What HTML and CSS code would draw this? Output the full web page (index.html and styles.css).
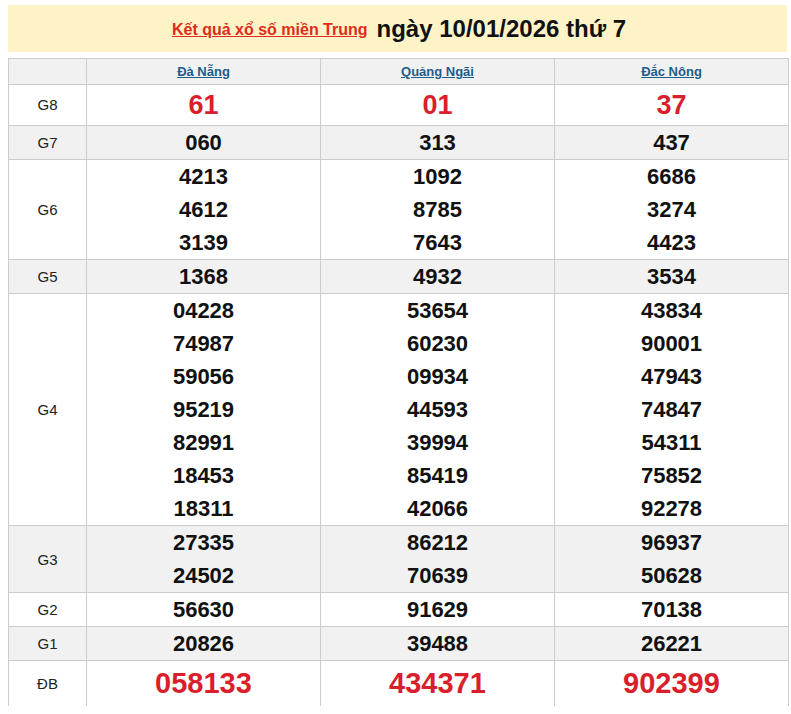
FILE: index.html
```html
<!DOCTYPE html>
<html lang="vi">
<head>
<meta charset="utf-8">
<title>Kết quả xổ số miền Trung</title>
<link rel="stylesheet" href="styles.css">
</head>
<body>
<div class="title-bar">
  <a class="title-link" href="#">Kết quả xổ số miền Trung</a>
  <span class="title-date">ngày 10/01/2026 thứ 7</span>
</div>
<table class="results">
  <colgroup>
    <col class="c-label"><col class="c-prov"><col class="c-prov"><col class="c-prov">
  </colgroup>
  <tr class="head">
    <td></td>
    <td><a href="#">Đà Nẵng</a></td>
    <td><a href="#">Quảng Ngãi</a></td>
    <td><a href="#">Đắc Nông</a></td>
  </tr>
  <tr class="g8">
    <td class="lbl">G8</td>
    <td><div>61</div></td><td><div>01</div></td><td><div>37</div></td>
  </tr>
  <tr class="alt">
    <td class="lbl">G7</td>
    <td><div>060</div></td><td><div>313</div></td><td><div>437</div></td>
  </tr>
  <tr>
    <td class="lbl">G6</td>
    <td><div>4213</div><div>4612</div><div>3139</div></td>
    <td><div>1092</div><div>8785</div><div>7643</div></td>
    <td><div>6686</div><div>3274</div><div>4423</div></td>
  </tr>
  <tr class="alt">
    <td class="lbl">G5</td>
    <td><div>1368</div></td><td><div>4932</div></td><td><div>3534</div></td>
  </tr>
  <tr>
    <td class="lbl">G4</td>
    <td><div>04228</div><div>74987</div><div>59056</div><div>95219</div><div>82991</div><div>18453</div><div>18311</div></td>
    <td><div>53654</div><div>60230</div><div>09934</div><div>44593</div><div>39994</div><div>85419</div><div>42066</div></td>
    <td><div>43834</div><div>90001</div><div>47943</div><div>74847</div><div>54311</div><div>75852</div><div>92278</div></td>
  </tr>
  <tr class="alt">
    <td class="lbl">G3</td>
    <td><div>27335</div><div>24502</div></td>
    <td><div>86212</div><div>70639</div></td>
    <td><div>96937</div><div>50628</div></td>
  </tr>
  <tr>
    <td class="lbl">G2</td>
    <td><div>56630</div></td><td><div>91629</div></td><td><div>70138</div></td>
  </tr>
  <tr class="alt">
    <td class="lbl">G1</td>
    <td><div>20826</div></td><td><div>39488</div></td><td><div>26221</div></td>
  </tr>
  <tr class="db">
    <td class="lbl">ĐB</td>
    <td><div>058133</div></td><td><div>434371</div></td><td><div>902399</div></td>
  </tr>
</table>
</body>
</html>
```
FILE: styles.css
```css
html, body {
  background: #ffffff;
}
body {
  margin: 5px 0 0 8px;
  font-family: "Liberation Sans", Arial, sans-serif;
  color: #111;
}
.title-bar {
  width: 779px;
  height: 47px;
  background: #fdf3c6;
  display: flex;
  align-items: center;
  justify-content: center;
  gap: 9px;
  padding-left: 3px;
  box-sizing: border-box;
}
.title-link {
  color: #dd2b1c;
  font-size: 16px;
  font-weight: bold;
  text-decoration: underline;
  position: relative;
  top: 1px;
}
.title-date {
  color: #111;
  font-size: 24px;
  font-weight: bold;
}
.results {
  margin-top: 6px;
  width: 779px;
  border-collapse: collapse;
  table-layout: fixed;
}
.c-label { width: 78px; }
.c-prov { width: 234px; }
.results td {
  border: 1px solid #cccccc;
  text-align: center;
  vertical-align: middle;
  padding: 0;
  font-size: 22px;
  font-weight: bold;
  line-height: 33px;
  color: #111;
}
.results td.lbl {
  font-size: 15px;
  font-weight: normal;
  color: #222;
}
.results tr.head td {
  background: #f1f1f1;
  line-height: 25px;
  font-size: 13px;
  font-weight: bold;
}
.results tr.head a {
  color: #1d5d8c;
  text-decoration: underline;
}
.results tr.alt td {
  background: #f1f1f1;
}
.results tr.g8 td {
  line-height: 40px;
  font-size: 27px;
  color: #d91f2c;
}
.results tr.g8 td.lbl,
.results tr.db td.lbl {
  font-size: 15px;
  color: #222;
}
.results tr.db td {
  line-height: 45px;
  font-size: 29px;
  color: #d91f2c;
  border-bottom: none;
}
```
